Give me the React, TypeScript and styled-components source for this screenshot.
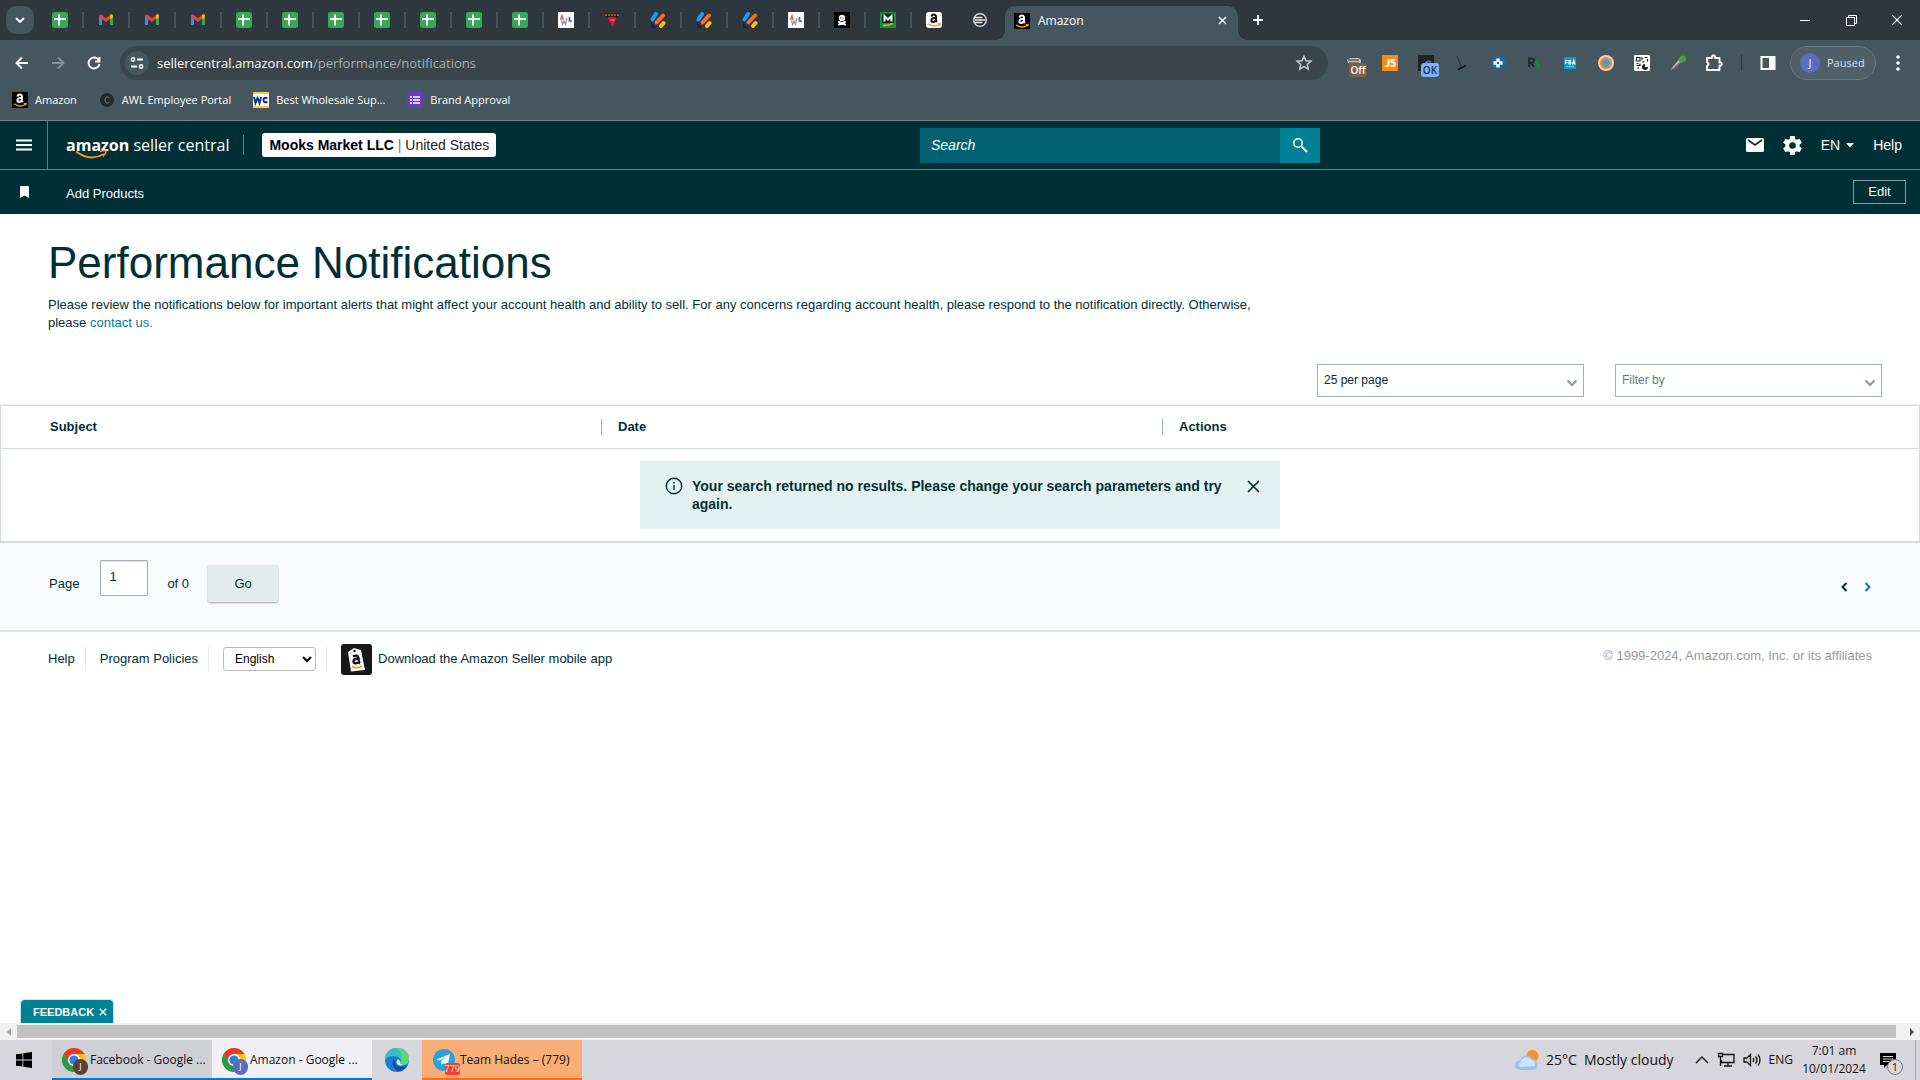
import React from "react";
import styled, { createGlobalStyle } from "styled-components";

const UI = '"Open Sans", "Noto Sans", sans-serif';
const ARIAL = '"Liberation Sans", Arial, sans-serif';

const GlobalStyle = createGlobalStyle`
  *, *::before, *::after { box-sizing: border-box; }
  body { margin: 0; background: #fff; }
  button, input, select { font: inherit; margin: 0; }
  button { border: 0; padding: 0; background: none; color: inherit; cursor: pointer; }
  a { color: inherit; text-decoration: none; }
  svg { display: block; flex: none; }
`;

const Shell = styled.div`
  display: flex;
  flex-direction: column;
  min-height: 100vh;
  font-family: ${ARIAL};
  font-size: 13px;
  line-height: 18px;
  color: #002f36;
`;

/* ---------- browser window ---------- */

const TabStrip = styled.header`
  display: flex;
  align-items: center;
  height: 40px;
  padding-left: 6px;
  background: #2d373d;
  color: #fff;
  font-family: ${UI};
  font-size: 12px;
`;

const TabSearch = styled.button`
  display: grid;
  place-items: center;
  width: 28px;
  height: 28px;
  margin-right: 3px;
  border-radius: 10px;
  background: #45565f;
`;

const Tab = styled.button<{ $divided: boolean }>`
  position: relative;
  display: grid;
  place-items: center;
  width: 46px;
  height: 28px;
  &::after {
    content: "";
    position: absolute;
    right: -1px;
    top: 6px;
    width: 2px;
    height: 16px;
    background: ${(p) => (p.$divided ? "#45565f" : "transparent")};
  }
`;

const ActiveTab = styled.div`
  position: relative;
  display: flex;
  align-items: center;
  align-self: flex-end;
  gap: 8px;
  width: 233px;
  height: 34px;
  margin-left: 2px;
  padding: 0 11px 5px 9px;
  border-radius: 10px 10px 0 0;
  background: #45565f;
  &::before, &::after {
    content: "";
    position: absolute;
    bottom: 0;
    width: 10px;
    height: 10px;
  }
  &::before { left: -10px; background: radial-gradient(circle at 0 0, transparent 10px, #45565f 10px); }
  &::after { right: -10px; background: radial-gradient(circle at 100% 0, transparent 10px, #45565f 10px); }
`;

const TabTitle = styled.span`flex: 1;`;

const NewTab = styled.button`
  display: grid;
  place-items: center;
  width: 28px;
  height: 28px;
  margin-left: 6px;
`;

const WindowControls = styled.div`
  display: flex;
  margin-left: auto;
  button { display: grid; place-items: center; width: 46px; height: 34px; }
`;

const Toolbar = styled.div`
  display: flex;
  align-items: center;
  height: 46px;
  padding: 0 4px;
  background: #45565f;
  color: #fff;
  font-family: ${UI};
`;

const NavButton = styled.button`
  display: grid;
  place-items: center;
  width: 36px;
  height: 34px;
`;

const Omnibox = styled.form`
  display: flex;
  flex: 1;
  align-items: center;
  height: 34px;
  margin-left: 8px;
  padding: 0 15px 0 5px;
  border-radius: 17px;
  background: #39454b;
`;

const SiteInfo = styled.button`
  display: grid;
  place-items: center;
  width: 24px;
  height: 24px;
  margin-right: 8px;
  border-radius: 12px;
  background: #45565f;
`;

const Url = styled.a`
  flex: 1;
  color: #a6afb4;
  b { font-weight: 400; color: #fff; }
`;

const Extensions = styled.div`
  display: flex;
  margin-left: 8px;
`;

const Extension = styled.button`
  position: relative;
  display: grid;
  place-items: center;
  width: 36px;
  height: 34px;
`;

const ExtBadge = styled.span<{ $bg: string; $fg: string }>`
  position: absolute;
  left: 13px;
  bottom: 3px;
  min-width: 18px;
  border-radius: 3px;
  background: ${(p) => p.$bg};
  color: ${(p) => p.$fg};
  font-size: 10px;
  font-weight: 600;
  line-height: 14px;
  text-align: center;
`;

const Rule = styled.span<{ $h: number; $color: string }>`
  flex: none;
  width: 1px;
  height: ${(p) => p.$h}px;
  background: ${(p) => p.$color};
`;

const ToolbarDivider = styled.span`
  display: grid;
  place-items: center;
  width: 18px;
`;

const Profile = styled.button`
  display: flex;
  align-items: center;
  gap: 7px;
  width: 86px;
  height: 34px;
  margin: 0 4px;
  padding-left: 9px;
  border: 1px solid #66767e;
  border-radius: 17px;
  background: #4f6069;
  color: #d5dfe8;
  font-size: 11px;
`;

const Avatar = styled.span`
  width: 20px;
  height: 20px;
  border-radius: 10px;
  background: #5c6bc0;
  color: #fff;
  line-height: 20px;
  text-align: center;
`;

const Bookmarks = styled.nav`
  display: flex;
  align-items: flex-start;
  gap: 22px;
  height: 35px;
  padding: 5px 12px 0;
  border-bottom: 1px solid #74858a;
  background: #45565f;
  color: #fff;
  font-family: ${UI};
  font-size: 11px;
  a { display: flex; align-items: center; gap: 7px; }
`;

/* ---------- seller central ---------- */

const SiteHeader = styled.header`
  display: grid;
  grid-template-columns: 23fr 10fr 15fr;
  align-items: center;
  height: 49px;
  border-bottom: 1px solid #667c80;
  background: #002f36;
  color: #fff;
  font-size: 14px;
`;

const HeaderLeft = styled.div`
  display: flex;
  align-items: center;
  height: 48px;
`;

const Hamburger = styled.button`
  display: grid;
  place-items: center;
  width: 48px;
  height: 48px;
  border-right: 1px solid #667c80;
`;

const Brand = styled.a`
  position: relative;
  margin: 0 14px 0 18px;
  font-family: ${UI};
  font-size: 16px;
  line-height: 26px;
  white-space: nowrap;
  svg { position: absolute; left: 9px; top: 18px; }
`;

const Account = styled.button`
  height: 24px;
  margin-left: 18px;
  padding: 0 7px;
  border-radius: 3px;
  background: #fff;
  color: #000;
  white-space: nowrap;
  i { color: #667c80; font-style: normal; }
  span { color: #222; }
`;

const Search = styled.form`
  display: flex;
  height: 35px;
  input {
    flex: 1;
    min-width: 0;
    padding: 0 11px;
    border: 0;
    background: #016170;
    color: #fff;
    font-style: italic;
  }
  input::placeholder { color: #fff; opacity: 1; }
  button { display: grid; place-items: center; width: 40px; background: #008296; }
`;

const HeaderRight = styled.div`
  display: flex;
  align-items: center;
  justify-content: flex-end;
  gap: 19px;
  padding-right: 18px;
  button { display: flex; align-items: center; gap: 6px; }
`;

const SubNav = styled.nav`
  display: flex;
  align-items: center;
  height: 44px;
  padding: 0 14px 0 20px;
  background: #002f36;
  color: #fff;
  a { margin-left: 36px; padding-top: 3px; }
`;

const EditButton = styled.button`
  width: 53px;
  height: 24px;
  margin-left: auto;
  border: 1px solid #8a9c9f;
`;

const Main = styled.main`
  display: flex;
  flex: 1;
  flex-direction: column;
`;

const Intro = styled.section`
  max-width: 1320px;
  padding: 22px 48px 0;
`;

const Title = styled.h1`
  margin: 0 0 6px;
  font-size: 44px;
  font-weight: 400;
  line-height: 54px;
`;

const Lead = styled.p`
  max-width: 1224px;
  margin: 0;
  a { color: #008296; }
`;

const Filters = styled.div`
  display: flex;
  justify-content: flex-end;
  gap: 31px;
  padding: 32px 38px 8px 0;
`;

const Dropdown = styled.label<{ $muted?: boolean }>`
  display: grid;
  align-items: center;
  width: 267px;
  select {
    grid-area: 1 / 1;
    width: 100%;
    height: 33px;
    padding: 0 6px 2px;
    border: 1px solid #a2b1b3;
    border-radius: 0;
    appearance: none;
    background: #fff;
    color: ${(p) => (p.$muted ? "#66797c" : "#002f36")};
    font-size: 12px;
  }
  svg { grid-area: 1 / 1; justify-self: end; margin: 4px 6px 0 0; pointer-events: none; }
`;

const Table = styled.table`
  width: 100%;
  border: 1px solid #d5dbdb;
  border-bottom-width: 2px;
  border-collapse: separate;
  border-spacing: 0;
  table-layout: fixed;
  box-shadow: 0 -1px 1px #eef1f1;
  th {
    height: 43px;
    padding: 0;
    border-bottom: 1px solid #d5dbdb;
    text-align: left;
  }
  th:first-child { width: 600px; padding-left: 49px; }
  th:nth-child(2) { width: 561px; }
  td { height: 92px; padding: 0; }
`;

const HeadCell = styled.span`
  display: block;
  height: 16px;
  padding-left: 16px;
  border-left: 1px solid #a2b1b3;
  line-height: 16px;
`;

const Alert = styled.div`
  display: flex;
  align-items: flex-start;
  gap: 9px;
  width: 640px;
  margin: 0 auto;
  padding: 16px 20px 16px 25px;
  background: #e4f1f3;
  font-size: 14px;
  font-weight: 700;
  p { flex: 1; margin: 0; }
`;

const Pager = styled.form`
  display: flex;
  align-items: center;
  height: 89px;
  padding: 0 45px 6px 49px;
  border-bottom: 2px solid #dfe3e5;
  background: #f9fafb;
  label { display: flex; align-items: center; gap: 21px; }
  input {
    width: 48px;
    height: 36px;
    margin-bottom: 12px;
    padding: 0 8px 2px;
    border: 1px solid #a2b1b3;
    border-radius: 1px;
    background: #fff;
    box-shadow: inset 0 1px 1px #dde3e4;
    color: #002f36;
  }
`;

const GoButton = styled.button`
  width: 70px;
  height: 37px;
  margin-left: 19px;
  border-radius: 2px;
  background: #e3ebeb;
  box-shadow: 0 1px 2px #9aa4a6;
`;

const PageCount = styled.span`margin-left: 19px;`;

const PageArrows = styled.div`
  display: flex;
  gap: 10px;
  margin-left: auto;
  padding-top: 6px;
  button { display: grid; place-items: center; width: 14px; }
`;

const Footer = styled.footer`
  display: flex;
  align-items: center;
  height: 54px;
  padding: 0 48px;
  a { white-space: nowrap; }
`;

const FooterItem = styled.div`
  display: flex;
  align-items: center;
  height: 24px;
  margin-right: 14px;
  padding-right: 10px;
  border-right: 1px solid #e3e8e9;
  select {
    width: 93px;
    height: 24px;
    padding: 0 0 0 7px;
    border: 1px solid #bbb;
    border-radius: 3px;
    background: #fff;
    color: #000;
    font-size: 12px;
  }
`;

const AppLink = styled.a`display: flex; align-items: center; gap: 6px;`;

const Copyright = styled.small`
  margin: 0 0 6px auto;
  color: #999;
  font-size: 13px;
`;

const Feedback = styled.button`
  display: flex;
  align-items: center;
  align-self: flex-start;
  gap: 5px;
  height: 24px;
  margin: auto 0 0 20px;
  padding: 0 6px 0 12px;
  border: 1px solid #cfe0e2;
  border-bottom: 0;
  border-radius: 5px 5px 0 0;
  background: #008296;
  color: #fff;
  font-size: 11px;
  font-weight: 700;
`;

/* ---------- desktop ---------- */

const ScrollBar = styled.div`
  display: flex;
  align-items: center;
  gap: 3px;
  height: 17px;
  padding: 0 5px 0 6px;
  background: #f1f1f1;
`;

const Thumb = styled.div`
  flex: 1;
  height: 13px;
  margin: 0 10px 0 2px;
  background: #c1c1c1;
`;

const Taskbar = styled.footer`
  display: flex;
  align-items: center;
  height: 40px;
  background: #d6d6dc;
  color: #111;
  font-family: ${UI};
  font-size: 12px;
`;

const StartButton = styled.button`
  display: grid;
  place-items: center;
  width: 52px;
  height: 40px;
  padding-right: 4px;
`;

const Task = styled.button<{ $bg: string; $line: string }>`
  position: relative;
  display: flex;
  align-items: center;
  gap: 4px;
  width: 160px;
  height: 40px;
  padding: 2px 0 0 10px;
  border-bottom: 2px solid ${(p) => p.$line};
  background: ${(p) => p.$bg};
  white-space: nowrap;
`;

const TaskIcon = styled.span`position: relative; width: 24px;`;

const TaskBadge = styled.span<{ $bg: string; $square?: boolean }>`
  position: absolute;
  right: ${(p) => (p.$square ? -4 : -2)}px;
  bottom: -3px;
  min-width: 15px;
  height: ${(p) => (p.$square ? 12 : 16)}px;
  border-radius: ${(p) => (p.$square ? 2 : 8)}px;
  background: ${(p) => p.$bg};
  color: #fff;
  font-size: 9px;
  line-height: ${(p) => (p.$square ? 12 : 16)}px;
  text-align: center;
`;

const EdgeButton = styled.button`
  display: grid;
  place-items: center;
  width: 50px;
  height: 40px;
`;

const Tray = styled.div`
  display: flex;
  align-items: center;
  gap: 8px;
  margin-left: auto;
`;

const Weather = styled.button`
  display: flex;
  align-items: center;
  gap: 7px;
  margin-right: 13px;
  font-size: 14px;
`;

const Clock = styled.time`
  width: 66px;
  line-height: 18px;
  text-align: center;
`;

const Notices = styled.button`
  position: relative;
  width: 24px;
  height: 24px;
  margin-left: 4px;
  span {
    position: absolute;
    right: 0;
    bottom: -3px;
    width: 16px;
    height: 16px;
    border: 1px solid #777;
    border-radius: 8px;
    background: #d9d9dd;
    font-size: 11px;
    line-height: 14px;
  }
`;

const DesktopEdge = styled(Rule)`margin: 0 4px;`;

/* ---------- drawings ---------- */

const Svg = ({ w = 16, h, box, children }: { w?: number; h?: number; box?: string; children: React.ReactNode }) => (
  <svg width={w} height={h ?? w} viewBox={box ?? `0 0 ${w} ${h ?? w}`} fill="none" aria-hidden="true">{children}</svg>
);

const Sheets = () => (
  <Svg><rect width="16" height="16" rx="2" fill="#34a853" /><path d="M2 7h12M7 2.500v11" stroke="#fff" strokeWidth="2" /></Svg>
);
const Gmail = () => (
  <Svg>
    <path d="M1 4v9h3V6.500z" fill="#4285f4" /><path d="M15 4v9h-3V6.500z" fill="#34a853" />
    <path d="M1 4.500V4c0-1.500 1.600-2 2.600-1.200L8 6.200l4.400-3.400v4L8 10 1 5z" fill="#ea4335" />
    <path d="M12 3l.6-.4C13.600 2 15 2.500 15 4v1l-3 2.300z" fill="#fbbc04" />
  </Svg>
);
const Awl = () => (
  <Svg>
    <rect width="16" height="16" fill="#fff" />
    <path d="M2.500 8L4 3.500 5.500 8M3 6.500h2" stroke="#e4686a" strokeWidth="1.400" />
    <path d="M3.500 8.500l1.200 4L6 9l1.500 3.500L9 6" stroke="#9a9a9a" strokeWidth="1.300" />
    <path d="M11.500 5v4H14" stroke="#3a62b5" strokeWidth="1.600" />
  </Svg>
);
const RedTriangle = () => (
  <Svg>
    <path d="M3 5h10L8.500 14.500z" fill="#f01020" /><path d="M0 1.500h16L13.500 6h-11z" fill="#35161c" />
    <path d="M1 3h14" stroke="#c26a3a" strokeWidth="1.500" strokeDasharray="2 1" /><path d="M4 5.500h8" stroke="#a01d4c" />
    <path d="M6.500 8h4" stroke="#ff9aa0" />
  </Svg>
);
const Stripes = () => (
  <Svg>
    <path d="M2.500 7.500L6 2" stroke="#159bff" strokeWidth="4" strokeLinecap="round" />
    <path d="M6.500 10.500L13 3.500" stroke="#ff6a13" strokeWidth="4" strokeLinecap="round" />
    <path d="M11 14l2.500-3" stroke="#fdb924" strokeWidth="4" strokeLinecap="round" />
    <path d="M1 10l5 6H1z" fill="#1c1f5c" />
  </Svg>
);
const Skull = () => (
  <Svg>
    <rect width="16" height="16" fill="#000" /><circle cx="8" cy="6" r="3.200" fill="#fff" />
    <path d="M5 10l6 2.500M11 10l-6 2.500" stroke="#fff" strokeWidth="2" strokeLinecap="round" />
    <circle cx="6.800" cy="6" r=".6" fill="#000" /><circle cx="9.200" cy="6" r=".6" fill="#000" />
  </Svg>
);
const Merchant = () => (
  <Svg>
    <rect width="16" height="16" fill="#0a9a3c" /><path d="M2 1.500h12v9.500H2z" fill="#06280f" />
    <path d="M4.500 9.500V4L8 7.500 11.500 4v5.500" stroke="#fff" strokeWidth="2" />
    <path d="M3 13.500q5 0 10-2" stroke="#ffa21a" strokeWidth="1.500" />
  </Svg>
);
const AmazonMark = ({ bg, ink, round = 0 }: { bg: string; ink: string; round?: number }) => (
  <Svg>
    <rect width="16" height="16" rx={round} fill={bg} />
    <path d="M5.600 4.600C5.800 2 10 1.900 10 4.600V8q0 1.200.9 2" stroke={ink} strokeWidth="2" />
    <path d="M9.800 5.800C6.800 5.800 5.400 6.800 5.400 8.300c0 2.200 3.300 2.200 4.400 0" stroke={ink} strokeWidth="2" />
    <path d="M2 11.800c3.500 2.700 8 2.700 11.500.7M11.800 11.800l2.200-.3-.6 2" stroke="#f90" strokeWidth="1.400" />
  </Svg>
);
const EMark = () => (
  <Svg>
    <circle cx="8" cy="8" r="7" fill="#d8d8d8" /><circle cx="8" cy="8" r="5.500" fill="#1d2327" />
    <path d="M2 5.500h8.500M3 8h10M3 10.500h7.500" stroke="#f4f4f4" strokeWidth="1.400" />
  </Svg>
);
const Cross = ({ size, width = 1.5 }: { size: number; width?: number }) => (
  <Svg w={size} box="0 0 10 10"><path d="M1 1l8 8M9 1L1 9" stroke="currentColor" strokeWidth={width} /></Svg>
);
const Chrome = () => (
  <Svg w={24}>
    <circle cx="12" cy="12" r="12" fill="#fbc116" />
    <path d="M12 6h10.400A12 12 0 0 0 1.600 6L7 15z" fill="#e33b2e" />
    <path d="M1.600 6A12 12 0 0 0 12 24l5-9H7z" fill="#2a9c48" />
    <circle cx="12" cy="12" r="6" fill="#fff" /><circle cx="12" cy="12" r="4.600" fill="#2f7de9" />
  </Svg>
);

const favicons: (() => React.ReactElement)[] = [
  Sheets, Gmail, Gmail, Gmail, Sheets, Sheets, Sheets, Sheets, Sheets, Sheets, Sheets,
  Awl, RedTriangle, Stripes, Stripes, Stripes, Awl, Skull, Merchant,
  () => <AmazonMark bg="#fff" ink="#111" round={3} />, EMark,
];

const extensions: { name: string; art: React.ReactElement; badge?: [string, string, string] }[] = [
  { name: "Blocker", art: <Svg><path d="M1 5l3-2h9l2 2v3H2z" fill="#bdbdbd" /><path d="M3 7h10v2H5v4H3z" fill="#777" /><path d="M2 5h11" stroke="#333" /></Svg>, badge: ["Off", "#7b6046", "#fff"] },
  { name: "JavaScript switch", art: <Svg><rect width="16" height="16" rx="1" fill="#ff8a0f" /><path d="M6.500 4v5.500q0 2-3.500 1.500M13 5.300q-4-1.300-4 .7c0 1.800 4 1 4 3.200 0 2.300-3 2.300-4.500 1.300" stroke="#fff" strokeWidth="2" /></Svg> },
  { name: "Checker", art: <Svg><rect width="16" height="16" fill="#222" /><path d="M7 9q2-4 6-2" stroke="#2795d8" strokeWidth="1.600" /></Svg>, badge: ["OK", "#84aef5", "#17305c"] },
  { name: "Graph", art: <Svg><path d="M3 1l5 12" stroke="#2a3338" /><path d="M4 14.500l8-4" stroke="#111" strokeWidth="1.800" /></Svg> },
  { name: "Health", art: <Svg><circle cx="8" cy="8" r="7" fill="#1b6ba0" /><path d="M3.500 8h9M8 3.500v9" stroke="#fff" strokeWidth="3.400" /><rect x="7" y="7" width="2" height="2" fill="#1b6ba0" /></Svg> },
  { name: "Rapid sourcing", art: <Svg><path d="M3 12V3.500h2.500q2.500 0 2.500 2T5.500 8H3M5.500 8L8 12" stroke="#20282c" strokeWidth="1.900" /><path d="M13 7.300q-3.500-1-3.500.7c0 1.700 3.500 1 3.500 3 0 2-2.500 2-4 1" stroke="#0c8a3a" strokeWidth="1.900" /></Svg> },
  { name: "FBA calculator", art: <Svg><rect x="2" y="2" width="12" height="12" fill="#0c9bd8" /><path d="M3.500 9V5.500H6M3.500 7.500h2M7 9V5.500h1.500L8 7.300l1 .7-.5 1zM10.500 9.500l1.300-4 1.300 4M11 8.200h2" stroke="#fff" strokeWidth="1.100" /><path d="M4 11.500h8" stroke="#5cbfe8" /></Svg> },
  { name: "Target", art: <Svg><circle cx="8" cy="8" r="8" fill="#f4d3b4" /><circle cx="8" cy="8" r="6" fill="#f28336" /><circle cx="8" cy="8" r="3.500" fill="#29a9e0" /></Svg> },
  { name: "QR code", art: <Svg><rect width="16" height="16" rx="1" fill="#fff" /><path d="M2.500 2.500h3.500v3.500H2.500zM10.500 2.500h3M13.500 4v2.500M2.500 8.500h2M6 8.500v2H2.500M3 13h2M8 2v3M8 7h2.500" stroke="#222" strokeWidth="1.200" /><path d="M11 9a3 3 0 1 0 3 3h-3z" fill="#222" /></Svg> },
  { name: "Voice", art: <Svg><path d="M1 15l2-3.500L8.500 5 11 7.500 4.500 13z" fill="#b9b9b9" /><path d="M1 15l4-2.500L11 7.500l-1-1z" fill="#777" /><path d="M8 4.500L11 1q3-1.500 4.500 1t0 4L11.500 8z" fill="#3fa535" /></Svg> },
  { name: "Extensions", art: <Svg w={18}><path d="M2 4h5V2.500q1.500-2.500 3 0V4h4.500v4.500H16q1.500 1.500 0 3h-1.500V16H2v-4q3-2 0-4z" stroke="#fff" strokeWidth="1.900" strokeLinejoin="round" /></Svg> },
];

const DownArrow = () => <Svg w={12} h={8}><path d="M1.500 1.500L6 6l4.500-4.500" stroke="#849a9d" strokeWidth="2" /></Svg>;

export default function App() {
  return (
    <Shell>
      <GlobalStyle />
      <TabStrip>
        <TabSearch aria-label="Search tabs"><Svg w={10} h={6}><path d="M1 1l4 4 4-4" stroke="#fff" strokeWidth="1.800" /></Svg></TabSearch>
        {favicons.map((Icon, i) => <Tab key={i} $divided={i < 19} aria-label={`Tab ${i + 1}`}><Icon /></Tab>)}
        <ActiveTab>
          <AmazonMark bg="#000" ink="#fff" /><TabTitle>Amazon</TabTitle>
          <button aria-label="Close tab"><Cross size={9} width={1.6} /></button>
        </ActiveTab>
        <NewTab aria-label="New tab"><Svg w={12}><path d="M6 1v10M1 6h10" stroke="#fff" strokeWidth="1.800" /></Svg></NewTab>
        <WindowControls>
          <button aria-label="Minimize"><Svg w={10}><path d="M0 5.500h10" stroke="#fff" /></Svg></button>
          <button aria-label="Restore"><Svg w={11}><path d="M.5 2.500h8v8h-8zM2.500 2.500v-2h8v8h-2" stroke="#fff" /></Svg></button>
          <button aria-label="Close"><Cross size={12} width={1} /></button>
        </WindowControls>
      </TabStrip>

      <Toolbar>
        <NavButton aria-label="Back"><Svg w={14}><path d="M13 7H2M7 1.500L1.500 7 7 12.500" stroke="#fff" strokeWidth="1.900" /></Svg></NavButton>
        <NavButton aria-label="Forward"><Svg w={14}><path d="M1 7h11M7 1.500L12.500 7 7 12.500" stroke="#84929a" strokeWidth="1.900" /></Svg></NavButton>
        <NavButton aria-label="Reload"><Svg w={14}><path d="M12 4.500A5.500 5.500 0 1 0 12.500 8M12.500 1v4.500H8" stroke="#fff" strokeWidth="1.900" /></Svg></NavButton>
        <Omnibox>
          <SiteInfo type="button" aria-label="Site information">
            <Svg w={14} h={12}><circle cx="3" cy="2.500" r="1.700" stroke="#fff" strokeWidth="1.500" /><path d="M7 2.500h6M1 9.500h6" stroke="#fff" strokeWidth="1.800" /><circle cx="11" cy="9.500" r="1.700" stroke="#fff" strokeWidth="1.500" /></Svg>
          </SiteInfo>
          <Url href="#"><b>sellercentral.amazon.com</b>/performance/notifications</Url>
          <button type="button" aria-label="Bookmark this page">
            <Svg w={18} box="0 0 24 24"><path d="M12 3l2.700 6 6.500.6-4.900 4.300 1.500 6.400L12 16.900l-5.800 3.400 1.500-6.400-4.900-4.300 6.500-.6z" stroke="#c3cbd0" strokeWidth="2" /></Svg>
          </button>
        </Omnibox>
        <Extensions>
          {extensions.map((e) => (
            <Extension key={e.name} aria-label={e.name}>{e.art}{e.badge && <ExtBadge $bg={e.badge[1]} $fg={e.badge[2]}>{e.badge[0]}</ExtBadge>}</Extension>
          ))}
        </Extensions>
        <ToolbarDivider><Rule $h={16} $color="#2d373d" /></ToolbarDivider>
        <Extension aria-label="Side panel"><Svg><path d="M1.500 2h13v12h-13z" stroke="#fff" strokeWidth="2" /><path d="M9 2h6v12H9z" fill="#fff" /></Svg></Extension>
        <Profile><Avatar>J</Avatar>Paused</Profile>
        <Extension aria-label="Menu"><Svg w={4} h={16}><circle cx="2" cy="2" r="1.800" fill="#fff" /><circle cx="2" cy="8" r="1.800" fill="#fff" /><circle cx="2" cy="14" r="1.800" fill="#fff" /></Svg></Extension>
      </Toolbar>
      <Bookmarks>
        <a href="#"><AmazonMark bg="#000" ink="#fff" />Amazon</a>
        <a href="#"><Svg><circle cx="8" cy="8" r="7" fill="#20292e" /><path d="M10.500 5.500q-4.500-2-4.500 2.500t4.500 2.500" stroke="#71828a" /></Svg>AWL Employee Portal</a>
        <a href="#"><Svg><rect width="16" height="16" fill="#fff" /><path d="M0 1h16M0 15h16" stroke="#ffcb3d" strokeWidth="2" /><path d="M1 5l1.500 6L4.500 6l2 5L8 5M14.500 6.200q-4-1.500-4 1.800t4 1.800" stroke="#0b3494" strokeWidth="2" /></Svg>Best Wholesale Sup...</a>
        <a href="#"><Svg><rect width="16" height="16" rx="1" fill="#673ab7" /><path d="M3 5h2M3 8h2M3 11h2M6 5h7M6 8h7M6 11h7" stroke="#fff" strokeWidth="1.500" /></Svg>Brand Approval</a>
      </Bookmarks>

      <SiteHeader>
        <HeaderLeft>
          <Hamburger aria-label="Menu"><Svg w={16} h={12}><path d="M0 1.500h16M0 6h16M0 10.500h16" stroke="#fff" strokeWidth="1.800" /></Svg></Hamburger>
          <Brand href="#">
            <b>amazon</b> seller central
            <Svg w={33} h={10}><path d="M1 1.500q14 10.500 28 2.500" stroke="#f7981d" strokeWidth="2" /><path d="M25 1.500q7-2 6 .5t-3 4.500" stroke="#f7981d" strokeWidth="1.500" /></Svg>
          </Brand>
          <Rule $h={20} $color="#667c80" />
          <Account><b>Mooks Market LLC</b> <i>|</i> <span>United States</span></Account>
        </HeaderLeft>
        <Search>
          <input aria-label="Search" placeholder="Search" />
          <button type="button" aria-label="Search"><Svg w={16}><circle cx="6" cy="6" r="4.300" stroke="#fff" strokeWidth="1.500" /><path d="M9.200 9.200L15 15" stroke="#fff" strokeWidth="1.900" /></Svg></button>
        </Search>
        <HeaderRight>
          <button aria-label="Messages"><Svg w={18} h={14}><rect width="18" height="14" rx="1.500" fill="#fff" /><path d="M2 2l7 5 7-5" stroke="#002f36" strokeWidth="1.700" /></Svg></button>
          <button aria-label="Settings"><Svg w={19} box="2 2 20 20"><path fill="#fff" d="M19.430 12.980c.04-.32.070-.64.070-.98s-.03-.66-.07-.98l2.110-1.650c.19-.15.240-.42.120-.64l-2-3.460c-.12-.22-.39-.3-.61-.22l-2.490 1c-.52-.4-1.080-.73-1.690-.98l-.38-2.650A.49.490 0 0 0 14 2h-4c-.25 0-.46.180-.49.420l-.38 2.650c-.61.250-1.170.590-1.690.980l-2.490-1c-.23-.09-.49 0-.61.220l-2 3.460c-.13.220-.07.490.12.640l2.110 1.650c-.04.320-.07.650-.07.980s.03.660.07.980l-2.110 1.650c-.19.150-.24.420-.12.640l2 3.460c.12.220.39.300.61.220l2.490-1c.52.400 1.080.730 1.690.980l.38 2.650c.03.240.240.420.490.420h4c.25 0 .46-.18.490-.42l.38-2.650c.61-.25 1.170-.59 1.690-.98l2.490 1c.23.090.49 0 .61-.22l2-3.460c.12-.22.070-.49-.12-.64zM12 15.500a3.500 3.500 0 1 1 0-7 3.500 3.500 0 0 1 0 7z" /></Svg></button>
          <button>EN<Svg w={8} h={5}><path d="M0 0h8L4 4.500z" fill="#fff" /></Svg></button>
          <a href="#">Help</a>
        </HeaderRight>
      </SiteHeader>
      <SubNav>
        <Svg w={10} h={12}><path d="M0 1q0-1 1-1h7q1 0 1 1v11L4.500 9.500 0 12z" fill="#fff" /></Svg>
        <a href="#">Add Products</a>
        <EditButton>Edit</EditButton>
      </SubNav>

      <Main>
        <Intro>
          <Title>Performance Notifications</Title>
          <Lead>Please review the notifications below for important alerts that might affect your account health and ability to sell. For any concerns regarding account health, please respond to the notification directly. Otherwise, please <a href="#">contact us.</a></Lead>
        </Intro>
        <Filters>
          <Dropdown><select aria-label="Results per page"><option>25 per page</option></select><DownArrow /></Dropdown>
          <Dropdown $muted><select aria-label="Filter by"><option>Filter by</option></select><DownArrow /></Dropdown>
        </Filters>
        <Table>
          <thead><tr><th>Subject</th><th><HeadCell>Date</HeadCell></th><th><HeadCell>Actions</HeadCell></th></tr></thead>
          <tbody><tr><td colSpan={3}>
            <Alert role="status">
              <Svg w={18}><circle cx="9" cy="9" r="7.700" stroke="#002f36" strokeWidth="1.400" /><path d="M9 8v5M9 5v1.500" stroke="#002f36" strokeWidth="1.400" /></Svg>
              <p>Your search returned no results. Please change your search parameters and try again.</p>
              <button aria-label="Dismiss"><Svg w={13} h={18}><path d="M1 4l11 11M12 4L1 15" stroke="#002f36" strokeWidth="1.600" /></Svg></button>
            </Alert>
          </td></tr></tbody>
        </Table>
        <Pager>
          <label>Page<input defaultValue="1" /></label>
          <PageCount>of 0</PageCount>
          <GoButton type="button">Go</GoButton>
          <PageArrows>
            <button type="button" aria-label="Previous page"><Svg w={8} h={10}><path d="M6.500 1l-4 4 4 4" stroke="#002f36" strokeWidth="1.900" /></Svg></button>
            <button type="button" aria-label="Next page"><Svg w={8} h={10}><path d="M1.500 1l4 4-4 4" stroke="#008296" strokeWidth="1.900" /></Svg></button>
          </PageArrows>
        </Pager>
        <Footer>
          <FooterItem><a href="#">Help</a></FooterItem>
          <FooterItem><a href="#">Program Policies</a></FooterItem>
          <FooterItem><select aria-label="Language"><option>English</option></select></FooterItem>
          <AppLink href="#">
            <Svg w={31}>
              <rect width="31" height="31" rx="3" fill="#171717" /><path d="M7 8l6-4 7 2 4 20-14 1.500z" fill="#f5f5f5" /><circle cx="13.500" cy="7" r="1.200" fill="#171717" />
              <path d="M12 12.500q5-2.500 5.500 1.500l.5 4q.2 1 1 1.500M17.500 14.500q-5 0-5 3t5 1" stroke="#111" strokeWidth="2.300" /><path d="M11 22.500q5 2.500 10-.5" stroke="#f7981d" strokeWidth="1.500" />
            </Svg>
            Download the Amazon Seller mobile app
          </AppLink>
          <Copyright>© 1999-2024, Amazon.com, Inc. or its affiliates</Copyright>
        </Footer>
        <Feedback>FEEDBACK<Cross size={8} width={1.8} /></Feedback>
      </Main>

      <ScrollBar>
        <Svg w={6} h={8}><path d="M5 0v8L1 4z" fill="#a3a3a3" /></Svg><Thumb /><Svg w={6} h={8}><path d="M1 0v8l4-4z" fill="#505050" /></Svg>
      </ScrollBar>
      <Taskbar>
        <StartButton aria-label="Start"><Svg><path d="M0 2.300l6.500-.9v6.200H0zM7.300 1.300L16 0v7.600H7.300zM0 8.400h6.500v6.200L0 13.700zM7.300 8.400H16V16l-8.700-1.200z" fill="#000" /></Svg></StartButton>
        <Task $bg="#cfcfd6" $line="#0078d7"><TaskIcon><Chrome /><TaskBadge $bg="#5d4037">J</TaskBadge></TaskIcon>Facebook - Google ...</Task>
        <Task $bg="#f0f0f4" $line="#0078d7"><TaskIcon><Chrome /><TaskBadge $bg="#5c6bc0">J</TaskBadge></TaskIcon>Amazon - Google ...</Task>
        <EdgeButton aria-label="Edge">
          <Svg w={24}>
            <circle cx="12" cy="12" r="12" fill="#1b7fd0" /><path d="M0 12A12 12 0 0 1 24 11q0 6-7 6-3-1-1-4-1-5-8-5-5 0-8 4z" fill="#35c1c4" /><path d="M12 0a12 12 0 0 1 12 11q0 6-7 6-3-1-1-4 2-8-4-13z" fill="#5fd87a" />
            <path d="M8 11q-2 8 5 12 6 0 9-5-12 3-12-5.500z" fill="#124f9c" /><path d="M15 13q-1 3.500 3.500 4-6 1.500-7-2.500 0-2.500 2-3.500z" fill="#e6e6ea" />
          </Svg>
        </EdgeButton>
        <Task $bg="#f8ae76" $line="#ff6f0f">
          <TaskIcon><Svg w={24}><circle cx="12" cy="12" r="11" fill="#2aa1da" /><path d="M4.500 11.500L18 6l-2.500 12-4-3-2 2-.5-4 6-5-7.500 4.500z" fill="#fff" /></Svg><TaskBadge $bg="#f23c34" $square>779</TaskBadge></TaskIcon>
          Team Hades – (779)
        </Task>
        <Tray>
          <Weather>
            <Svg w={24} h={20}><circle cx="17.500" cy="6" r="6" fill="#f7931e" /><path d="M5 20a5 5 0 0 1 0-10 7 7 0 0 1 12.500-1A5.600 5.600 0 0 1 18.500 20z" fill="#9cc3f7" /><path d="M5 17a4 4 0 0 1 1-6 6 6 0 0 1 10.500-1A5 5 0 0 1 20 16z" fill="#cfe2fb" /></Svg>
            <span>25°C</span><span>Mostly cloudy</span>
          </Weather>
          <button aria-label="Hidden icons"><Svg w={14} h={8}><path d="M1 7l6-6 6 6" stroke="#111" strokeWidth="1.400" /></Svg></button>
          <Svg w={18} h={16}><path d="M5 2.500h12v8H4.500V8M11 10.500v3M7 14h8M1.500 1.500h4v3h-4zM3.500 4.500V14" stroke="#111" strokeWidth="1.300" /></Svg>
          <Svg w={18} h={14}><path d="M1 5h3l3.500-3.500v11L4 9H1zM10 5q1.500 2 0 4M12.500 3.500q3 3.500 0 7M15 1.500q4 5.500 0 11" stroke="#111" strokeWidth="1.300" /></Svg>
          <span>ENG</span>
          <Clock>7:01 am<br />10/01/2024</Clock>
          <Notices aria-label="Notifications"><Svg w={18}><path d="M1 2h16v12H8l-3 3v-3H1z" fill="#000" /><path d="M4 5.500h10M4 8h10M4 10.500h7" stroke="#ddd" /></Svg><span>1</span></Notices>
          <DesktopEdge $h={40} $color="#a5a5ab" />
        </Tray>
      </Taskbar>
    </Shell>
  );
}
